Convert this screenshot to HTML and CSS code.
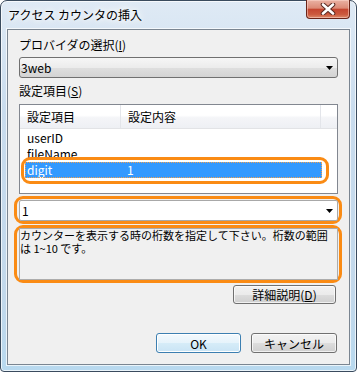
FILE: index.html
```html
<!DOCTYPE html>
<html lang="ja">

<head>
    <meta charset="UTF-8">
    <title>アクセス カウンタの挿入</title>
    <link rel="stylesheet" href="styles.css">
</head>

<body>
    <div class="window">
        <div class="titlebar">
            <span class="title">アクセス カウンタの挿入</span>
            <button class="close">
                <svg width="18" height="12" viewBox="0 0 18 12">
                    <path d="M4 1.5L14 10.5M14 1.5L4 10.5" stroke="#5a2a22" stroke-width="4.6" stroke-linecap="round" />
                    <path d="M4 1.5L14 10.5M14 1.5L4 10.5" stroke="#fff" stroke-width="2.6" stroke-linecap="round" />
                </svg>
            </button>
        </div>
        <div class="client">
            <div class="label">プロバイダの選択(<u>I</u>)</div>
            <div class="select">
                <span>3web</span>
                <svg class="arrow" width="7" height="4" viewBox="0 0 7 4"><path d="M0 0H7L3.5 4Z" /></svg>
            </div>
            <div class="label label-list">設定項目(<u>S</u>)</div>
            <div class="list">
                <div class="list-head">
                    <div class="col col-name">設定項目</div>
                    <div class="col col-value">設定内容</div>
                    <div class="col col-rest"></div>
                </div>
                <div class="rows">
                    <div class="row"><span class="cell-name">userID</span><span></span></div>
                    <div class="row"><span class="cell-name">fileName</span><span></span></div>
                    <div class="row selected"><span class="cell-name">digit</span><span>1</span></div>
                </div>
                <!-- 注目枠 -->
                <div class="ring"></div>
            </div>
            <div class="mark mark-combo">
                <div class="combo">
                    <span>1</span>
                    <svg class="arrow" width="7" height="4" viewBox="0 0 7 4"><path d="M0 0H7L3.5 4Z" /></svg>
                </div>
            </div>
            <div class="mark mark-desc">
                <div class="desc">カウンターを表示する時の桁数を指定して下さい。桁数の範囲は 1~10 です。</div>
            </div>
            <div class="detail-row">
                <button class="btn btn-detail">詳細説明(<u>D</u>)</button>
            </div>
            <div class="actions">
                <button class="btn btn-ok">OK</button>
                <button class="btn btn-cancel">キャンセル</button>
            </div>
        </div>
    </div>
</body>

</html>
```

FILE: styles.css
```css
body {
    margin: 0;
}

.window {
    width: 357px;
    height: 372px;
    box-sizing: border-box;
    border: 1px solid #3a4b5e;
    border-radius: 7px 7px 4px 4px;
    padding: 0 6px 6px;
    display: flex;
    flex-direction: column;
    background: linear-gradient(#dfeaf5, #c9dcee 30%, #c2d8eb 80%, #b8d9ef);
    box-shadow: inset 0 0 0 1px rgba(255, 255, 255, 0.7);
    font-family: "Noto Sans CJK JP", sans-serif;
    font-size: 12px;
    color: #000;
}

.titlebar {
    height: 28px;
    display: flex;
    align-items: flex-start;
}

.title {
    margin: 6px 0 0 1px;
    line-height: 16px;
    text-shadow: 0 0 5px #fff, 0 0 9px #fff, 0 0 14px #fff;
}

.close {
    margin: -1px 0 0 auto;
    width: 44px;
    height: 19px;
    padding: 0;
    border: 1px solid #6a2418;
    border-top: none;
    border-radius: 0 0 4px 4px;
    background: linear-gradient(#eab2a4, #dc8a76 45%, #c54630 52%, #cc5a3e 80%, #dc8a6a);
    box-shadow: inset 0 0 0 1px rgba(255, 220, 210, 0.5);
    display: flex;
    align-items: center;
    justify-content: center;
}

.client {
    flex: 1;
    border: 1px solid #7a8591;
    background: #f0f0f0;
    padding: 6px 11px 0;
    box-shadow: 0 0 0 1px rgba(255, 255, 255, 0.7);
}

.label {
    height: 18px;
    line-height: 18px;
}

.label-list {
    margin-top: 4px;
}

.select {
    margin-top: 3px;
    height: 21px;
    box-sizing: border-box;
    border: 1px solid #707070;
    border-radius: 3px;
    padding: 0 4px 0 1px;
    background: linear-gradient(#f6f6f6, #ececec 50%, #dfdfdf 51%, #d3d3d3);
    display: flex;
    align-items: center;
    justify-content: space-between;
    line-height: 19px;
}

.list {
    position: relative;
    margin-top: 4px;
    height: 90px;
    box-sizing: border-box;
    border: 1px solid #828790;
    background: #fff;
}

.list-head {
    display: flex;
    height: 24px;
    box-sizing: border-box;
    border-bottom: 1px solid #e2e3e6;
    background: linear-gradient(#ffffff, #ffffff 45%, #f4f5f8 55%, #eef0f4);
}

.col {
    line-height: 23px;
    padding-left: 7px;
    box-sizing: border-box;
    border-right: 1px solid #e3e5ea;
}

.col-name {
    width: 101px;
}

.col-value {
    width: 200px;
}

.col-rest {
    flex: 1;
    border-right: none;
}

.rows {
    padding-top: 1px;
}

.row {
    display: flex;
    margin-left: 5px;
    width: 297px;
    height: 16px;
    line-height: 16px;
    padding-left: 2px;
    box-sizing: border-box;
}

.cell-name {
    width: 100px;
}

.selected {
    background: #3399ff;
    color: #fff;
    outline: 1px dotted #f0a050;
    outline-offset: -1px;
}

.ring {
    position: absolute;
    left: 1px;
    top: 52px;
    width: 308px;
    height: 27px;
    box-sizing: border-box;
    border: 3px solid #fa8b14;
    border-radius: 9px;
}

.mark {
    margin: 2px -4px 0 -5px;
    border: 3px solid #fa8b14;
    border-radius: 9px;
    padding: 0 1px 0 2px;
}

.mark-combo {
    padding-top: 1px;
}

.mark-desc {
    margin-top: 1px;
}

.combo {
    height: 21px;
    box-sizing: border-box;
    border: 1px solid #a8a8a8;
    border-radius: 2px;
    background: #fff;
    padding: 0 4px 0 2px;
    display: flex;
    align-items: center;
    justify-content: space-between;
    line-height: 19px;
}

.desc {
    height: 52px;
    box-sizing: border-box;
    border: 1px solid #acacac;
    background: #f0f0f0;
    font-size: 11px;
    line-height: 13px;
}

.detail-row {
    margin-top: 2px;
    display: flex;
    justify-content: flex-end;
    padding-right: 2px;
}

.actions {
    margin-top: 29px;
    display: flex;
    justify-content: flex-end;
    gap: 10px;
    padding-right: 1px;
}

.btn {
    height: 19px;
    padding: 0;
    font-family: inherit;
    font-size: 12px;
    line-height: 17px;
    color: #000;
    border: 1px solid #707070;
    border-radius: 3px;
    background: linear-gradient(#f2f2f2, #ebebeb 50%, #dddddd 51%, #cfcfcf);
    box-shadow: inset 0 0 0 1px rgba(255, 255, 255, 0.7);
}

.btn-detail {
    width: 103px;
}

.btn-ok {
    width: 85px;
    height: 20px;
    border-color: #3c7fb1;
    background: linear-gradient(#f3f9fd, #e6f3fb 50%, #d6ecf8 51%, #c9e4f5);
    box-shadow: inset 0 0 0 1px #fff;
}

.btn-cancel {
    width: 86px;
    height: 20px;
}
```
